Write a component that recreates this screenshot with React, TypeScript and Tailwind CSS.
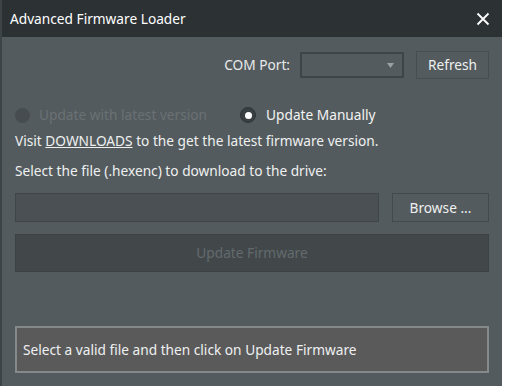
import React, { useState } from 'react';

const App: React.FC = () => {
  const [mode, setMode] = useState<'latest' | 'manual'>('manual');

  return (
    <div className="w-[507px] h-[392px] bg-white" style={{ fontFamily: '"Noto Sans", "Open Sans", sans-serif' }}>
      <div className="w-[502px] h-[386px] flex flex-col bg-[#545b5e] border-l-2 border-[#3d4446] text-[13.7px] leading-[20px]">
        {/* title bar */}
        <div className="h-[37px] shrink-0 bg-[#2c3234] flex items-center justify-between pl-[8px] pr-[12px]">
          <span className="text-white">Advanced Firmware Loader</span>
          <svg width="14" height="14" viewBox="0 0 14 14" className="text-white">
            <path d="M1.5 1.5 L12.5 12.5 M12.5 1.5 L1.5 12.5" stroke="currentColor" strokeWidth="1.8" />
          </svg>
        </div>

        <div className="flex-1 flex flex-col px-[13px]">
          {/* com port row */}
          <div className="flex items-center justify-end gap-[10px] mt-[14px] text-[#e8eaea]">
            <span>COM Port:</span>
            <div className="w-[104px] h-[26px] border-2 border-[#3f4547] bg-[#545b5e] flex items-center justify-end pr-[8px]">
              <svg width="7" height="5" viewBox="0 0 7 5">
                <path d="M0 0 H7 L3.5 5 Z" fill="#9ba1a3" />
              </svg>
            </div>
            <button className="ml-[2px] w-[73px] h-[28px] border border-[#474d50] bg-[#545b5e] text-[#eef0f0]">Refresh</button>
          </div>

          {/* radio row */}
          <div className="flex items-center h-[20px] mt-[26px]">
            <button onClick={() => setMode('latest')} className="flex items-center gap-[9px] text-[#6a7174]" disabled>
              <span className="w-[15px] h-[15px] rounded-full bg-[#464c4f]" />
              <span>Update with latest version</span>
            </button>
            <button onClick={() => setMode('manual')} className="flex items-center gap-[10px] ml-[33px] text-[#f2f3f3]">
              <span className="w-[16px] h-[16px] rounded-full bg-[#3a4042] border border-[#2f3537] flex items-center justify-center">
                {mode === 'manual' && <span className="w-[7px] h-[7px] rounded-full bg-white" />}
              </span>
              <span>Update Manually</span>
            </button>
          </div>

          <p className="mt-[6px] text-[#eef0f0]">
            Visit <span className="underline">DOWNLOADS</span> to the get the latest firmware version.
          </p>

          <p className="mt-[10px] text-[#eef0f0]">Select the file (.hexenc) to download to the drive:</p>

          {/* file row */}
          <div className="flex items-center gap-[13px] mt-[12px]">
            <div className="flex-1 h-[29px] bg-[#4a5053] border border-[#3f4548]" />
            <button className="w-[97px] h-[29px] border border-[#43494c] bg-[#545b5e] text-[#eef0f0]">Browse ...</button>
          </div>

          <button className="mt-[12px] h-[38px] w-full bg-[#42484a] border border-[#3c4244] text-[#636a6d]">
            Update Firmware
          </button>

          <div className="mt-[54px] h-[47px] bg-[#5a5a5b] border-2 border-[#85898a] flex items-center px-[6px] text-[#eef0f0]">
            Select a valid file and then click on Update Firmware
          </div>
        </div>
      </div>
    </div>
  );
};

export default App;
